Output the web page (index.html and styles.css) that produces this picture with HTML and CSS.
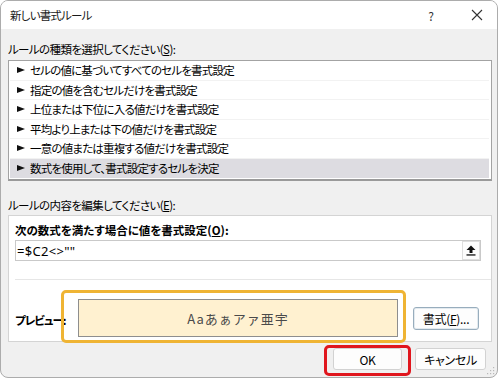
FILE: index.html
```
<!DOCTYPE html>
<html lang="ja">
<head>
<meta charset="utf-8">
<link rel="stylesheet" href="styles.css">
</head>
<body>
<div class="window">
  <div class="titlebar">
    <span class="title">新しい書式ルール</span>
    <span class="help">?</span>
    <span class="close"><svg width="12" height="12" viewBox="0 0 12 12"><path d="M1 1 L11 11 M11 1 L1 11" stroke="#333" stroke-width="1.1" fill="none"/></svg></span>
  </div>
  <div class="content">
    <div class="label first">ルールの種類を選択してください(<u>S</u>):</div>
    <div class="listbox">
      <div class="row"><svg class="tri" width="8" height="6" viewBox="0 0 8 6"><path d="M0 0 L8 3 L0 6 Z" fill="#111"/></svg><span>セルの値に基づいてすべてのセルを書式設定</span></div>
      <div class="row"><svg class="tri" width="8" height="6" viewBox="0 0 8 6"><path d="M0 0 L8 3 L0 6 Z" fill="#111"/></svg><span>指定の値を含むセルだけを書式設定</span></div>
      <div class="row"><svg class="tri" width="8" height="6" viewBox="0 0 8 6"><path d="M0 0 L8 3 L0 6 Z" fill="#111"/></svg><span>上位または下位に入る値だけを書式設定</span></div>
      <div class="row"><svg class="tri" width="8" height="6" viewBox="0 0 8 6"><path d="M0 0 L8 3 L0 6 Z" fill="#111"/></svg><span>平均より上または下の値だけを書式設定</span></div>
      <div class="row"><svg class="tri" width="8" height="6" viewBox="0 0 8 6"><path d="M0 0 L8 3 L0 6 Z" fill="#111"/></svg><span>一意の値または重複する値だけを書式設定</span></div>
      <div class="row selected"><svg class="tri" width="8" height="6" viewBox="0 0 8 6"><path d="M0 0 L8 3 L0 6 Z" fill="#111"/></svg><span>数式を使用して、書式設定するセルを決定</span></div>
    </div>
    <div class="label second">ルールの内容を編集してください(<u>E</u>):</div>
    <div class="panel">
      <div class="panel-title">次の数式を満たす場合に値を書式設定(<u>O</u>):</div>
      <div class="formula">
        <span class="formula-text">=$C2&lt;&gt;""</span>
        <span class="collapse"><svg width="10" height="11" viewBox="0 0 10 11"><path d="M5 0.5 L9.5 5 H6.5 V8 H3.5 V5 H0.5 Z" fill="#111"/><rect x="0.5" y="9.3" width="9" height="1.3" fill="#111"/></svg></span>
      </div>
      <div class="divider"></div>
      <div class="preview-row">
        <span class="preview-label">プレビュー:</span>
        <div class="preview-box">
          <span class="preview-text">Aaあぁアァ亜宇</span>
          <div class="highlight orange"></div>
        </div>
        <button class="btn format">書式(<u>F</u>)...</button>
      </div>
    </div>
    <div class="footer">
      <button class="btn ok">OK<span class="highlight red"></span></button>
      <button class="btn cancel">キャンセル</button>
    </div>
  </div>
  <svg class="grip" width="8" height="8" viewBox="0 0 8 8"><g fill="#b8b8b8"><rect x="6" y="0" width="1.2" height="1.2"/><rect x="3" y="3" width="1.2" height="1.2"/><rect x="6" y="3" width="1.2" height="1.2"/><rect x="0" y="6" width="1.2" height="1.2"/><rect x="3" y="6" width="1.2" height="1.2"/><rect x="6" y="6" width="1.2" height="1.2"/></g></svg>
</div>
</body>
</html>
```
FILE: styles.css
```
* { box-sizing: border-box; }
body {
  margin: 0;
  background: #ffffff;
  font-family: "Noto Sans CJK JP", "Noto Sans", sans-serif;
  font-size: 11.5px;
  letter-spacing: -0.8px;
  color: #000;
  font-feature-settings: "palt";
}
.window {
  width: 498px;
  height: 378px;
  border: 1px solid #acacac;
  border-radius: 8px;
  background: #f0f0f0;
  overflow: hidden;
  display: flex;
  flex-direction: column;
  position: relative;
}
.titlebar {
  height: 28px;
  flex: none;
  background: #ffffff;
  display: flex;
  align-items: center;
  padding-left: 9px;
  padding-right: 2px;
}
.title { flex: 1; color: #1a1a1a; font-size: 11.5px; }
.help {
  width: 20px;
  text-align: center;
  color: #333;
  margin-right: 18px;
  font-size: 12px;
  letter-spacing: 0;
}
.close {
  width: 36px;
  display: flex;
  justify-content: center;
  align-items: center;
}
.content {
  padding: 0 5px 0 7px;
  display: flex;
  flex-direction: column;
}
.label { line-height: 16px; height: 16px; letter-spacing: -0.6px; }
.label.first { margin-top: 12px; }
.label.second { margin-top: 16px; }
.listbox {
  margin-top: 3px;
  background: #fff;
  border: 1px solid #a3a3a3;
  border-bottom: 2px solid #9a9a9a;
  padding: 0 2px 1px 1px;
  display: grid;
  grid-auto-rows: 19.5px;
}
.row {
  display: flex;
  align-items: center;
  border-bottom: 1px solid #f2f2f2;
  padding-left: 7px;
  white-space: nowrap;
}
.row.selected { background: #dddce1; border-bottom: none; }
.tri { margin-right: 5px; flex: none; }
.panel {
  margin-top: 2px;
  background: #fff;
  border: 1px solid #d4d4d4;
  padding: 6px 0 4px 6px;
  display: flex;
  flex-direction: column;
}
.panel-title { font-weight: bold; line-height: 16px; height: 16px; letter-spacing: 0; }
.formula {
  margin-top: 2px;
  width: 466px;
  height: 21px;
  border: 1px solid #c9c9c9;
  display: flex;
  align-items: center;
  justify-content: space-between;
  padding-left: 1px;
}
.formula-text { font-size: 13px; letter-spacing: 0.3px; font-family: "Noto Sans", sans-serif; }
.collapse {
  width: 18px;
  height: 19px;
  border: 1px solid #dedede;
  background: #fdfdfd;
  display: flex;
  align-items: center;
  justify-content: center;
}
.divider {
  margin-top: 18px;
  height: 1px;
  background: #e6e6e6;
}
.preview-row {
  margin-top: 19px;
  height: 38px;
  display: flex;
  align-items: center;
}
.preview-label {
  width: 63px;
  font-weight: bold;
  padding-top: 3px;
  letter-spacing: -1px;
}
.preview-box {
  position: relative;
  width: 320px;
  height: 38px;
  background: #fff1d0;
  border: 1px solid #8e8e8e;
  display: flex;
  align-items: center;
  justify-content: center;
}
.preview-text {
  font-size: 13px;
  color: #4a4a4a;
  letter-spacing: 1px;
  font-feature-settings: normal;
}
.highlight {
  position: absolute;
  border-radius: 5px;
  pointer-events: none;
}
.highlight.orange {
  left: -18px;
  top: -10px;
  right: -9px;
  bottom: -7px;
  border: 3px solid #efb434;
}
.btn {
  font-family: inherit;
  font-size: 12px;
  letter-spacing: -0.3px;
  color: #000;
  padding: 0;
  border-radius: 3px;
  background: #fdfdfd;
  border: 1px solid #d2d2d2;
  font-feature-settings: "palt";
}
.btn.format {
  margin-left: 15px;
  width: 66px;
  height: 23px;
  border: 1px solid #98adbd;
  box-shadow: inset 0 0 0 1px #e3eaef;
}
.footer {
  display: flex;
  justify-content: flex-end;
  gap: 13px;
  margin-top: 6px;
  padding-right: 6px;
}
.btn.ok, .btn.cancel {
  height: 22px;
  position: relative;
}
.btn.ok { width: 69px; }
.btn.cancel { width: 71px; }
.highlight.red {
  left: -10px;
  top: -4px;
  right: -10px;
  bottom: -7px;
  border: 3px solid #e0161d;
}
.grip {
  position: absolute;
  right: 2px;
  bottom: 2px;
}
```
